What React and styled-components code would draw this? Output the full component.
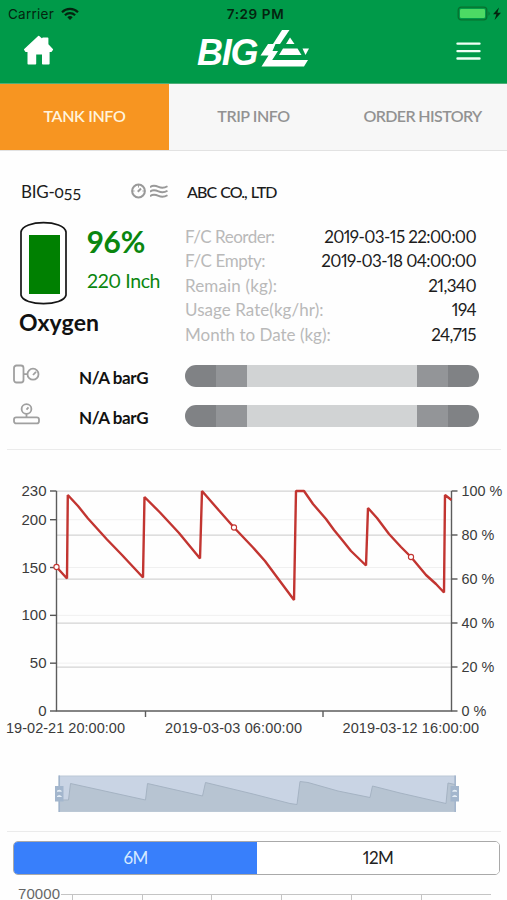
import styled, { createGlobalStyle } from "styled-components"

const GlobalStyle = createGlobalStyle`
    * { box-sizing: border-box; }
    body {
        margin: 0;
        background: #fefefe;
        font-family: "Lato", "Noto Sans", sans-serif;
        font-variant-numeric: proportional-nums;
        color: #1c1c1c;
    }
`

const Screen = styled.div`
    width: 507px;
    height: 900px;
    overflow: hidden;
    display: flex;
    flex-direction: column;
    background: #fefefe;
`

const Header = styled.header`
    height: 84px;
    flex: none;
    background: #009a49;
    border-bottom: 1px solid #4fae78;
`

const StatusBar = styled.div`
    height: 27px;
    display: grid;
    grid-template-columns: 1fr auto 1fr;
    align-items: center;
    padding: 0 4px 0 8px;
    font-family: "Inter", sans-serif;
    font-size: 13.5px;
    color: #04240f;
`

const Carrier = styled.div`
    display: flex;
    align-items: center;
    gap: 7px;
    letter-spacing: 0.25px;
`

const Clock = styled.div`
    font-weight: 600;
    font-size: 13.5px;
    letter-spacing: 0.6px;
`

const Battery = styled.div`
    display: flex;
    justify-content: flex-end;
`

const NavBar = styled.div`
    height: 56px;
    display: grid;
    grid-template-columns: 1fr auto 1fr;
    padding: 0 26px 0 23px;
`

const HomeButton = styled.div`
    padding-top: 8px;
`

const MenuButton = styled.div`
    display: flex;
    justify-content: flex-end;
    padding-top: 15px;
`

const Logo = styled.div`
    display: flex;
    padding: 2px 0 0 3px;
`

const LogoText = styled.span`
    width: 63px;
    padding-top: 3px;
    font-family: "Liberation Sans", Arial, sans-serif;
    font-size: 36px;
    line-height: 42px;
    font-weight: 700;
    font-style: italic;
    letter-spacing: -1.3px;
    color: #fff;
`

const Tabs = styled.nav`
    flex: none;
    height: 67px;
    display: grid;
    grid-template-columns: repeat(3, 1fr);
    background: #f7f7f7;
    border-bottom: 1px solid #e2e2e2;
`

const Tab = styled.div`
    display: flex;
    align-items: center;
    justify-content: center;
    padding-bottom: 3px;
    font-size: 16px;
    font-weight: 600;
    letter-spacing: ${(p) => p.$spacing || 0}px;
    color: ${(p) => (p.$active ? "#fff3dc" : "#929292")};
    background: ${(p) => (p.$active ? "#f79521" : "transparent")};
`

const Info = styled.section`
    flex: none;
    height: 200px;
    display: grid;
    grid-template-columns: 186px 1fr;
    padding-top: 30px;
`

const TankColumn = styled.div`
    padding-left: 20px;
`

const TankName = styled.div`
    height: 22px;
    display: flex;
    align-items: center;
    justify-content: space-between;
    padding: 0 18px 0 1px;
    font-size: 17px;
    line-height: 22px;
    letter-spacing: -0.25px;
    font-variant-numeric: oldstyle-nums;
`

const TankIcons = styled.div`
    display: flex;
    gap: 3px;
    padding-bottom: 2px;
`

const TankBody = styled.div`
    display: flex;
    gap: 20px;
    padding-top: 18px;
`

const Levels = styled.div`
    color: #0a860f;
`

const Percent = styled.div`
    padding-top: 2px;
    font-size: 30px;
    line-height: 36px;
    font-weight: 700;
`

const Inches = styled.div`
    padding-top: 10px;
    font-size: 19.5px;
    line-height: 24px;
    letter-spacing: -0.4px;
`

const Product = styled.div`
    margin: 2px 0 0 -1px;
    font-size: 23px;
    line-height: 30px;
    font-weight: 700;
    letter-spacing: 0.15px;
    color: #111;
`

const Customer = styled.div`
    padding-left: 1px;
    font-size: 16px;
    line-height: 22px;
    font-weight: 500;
    letter-spacing: -0.95px;
    word-spacing: 1px;
`

const Facts = styled.dl`
    margin: 22px 31px 0 0;
`

const Fact = styled.div`
    height: 24.4px;
    display: flex;
    justify-content: space-between;
    font-size: 17px;
    line-height: 24px;

    dt {
        margin-left: -1px;
        color: #b9b9b9;
        letter-spacing: ${(p) => p.$labelSpacing}px;
    }
    dd {
        margin: 0;
        letter-spacing: -0.6px;
    }
`

const Gauges = styled.section`
    flex: none;
    height: 99px;
    margin: 0 6px 0 7px;
    padding-top: 5px;
    border-bottom: 1px solid #ebebeb;
`

const Gauge = styled.div`
    height: 40.3px;
    display: grid;
    grid-template-columns: 72px 106px 294px;
    align-items: center;

    svg { margin: 0 0 4px 6px; }
`

const GaugeValue = styled.span`
    padding-top: 3px;
    font-size: 17px;
    font-weight: 700;
    letter-spacing: -0.4px;
    color: #111;
`

const GaugeBar = styled.div`
    height: 22px;
    display: flex;
    border-radius: 11px;
    overflow: hidden;
`

const Segment = styled.i`
    width: ${(p) => p.$width}px;
    background: ${(p) => p.$color};
`

const ChartSection = styled.section`
    flex: none;
    height: 382px;
    margin: 0 6px 0 7px;
    border-bottom: 1px solid #ebebeb;

    svg {
        display: block;
        margin-left: -7px;
    }
`

const AxisText = styled.text`
    font-family: "Liberation Sans", Arial, sans-serif;
    font-size: ${(p) => p.$size || 14.5}px;
    fill: #3b3b3b;
`

const Toggle = styled.div`
    flex: none;
    height: 34px;
    margin: 9px 7px 0 13px;
    display: grid;
    grid-template-columns: 243px 1fr;
    border: 1px solid #a9a9a9;
    border-radius: 5px;
    overflow: hidden;
`

const ToggleItem = styled.div`
    display: flex;
    align-items: center;
    justify-content: center;
    padding-bottom: 1px;
    font-size: 17px;
    letter-spacing: -0.6px;
    color: ${(p) => (p.$active ? "#d5e9ff" : "#222")};
    background: ${(p) => (p.$active ? "#387ffb" : "#fff")};
`

const UsageChart = styled.div`
    flex: none;
    height: 25px;

    svg { display: block; }
`

const facts = [
    { label: "F/C Reorder:", value: "2019-03-15 22:00:00", spacing: -0.5 },
    { label: "F/C Empty:", value: "2019-03-18 04:00:00", spacing: -0.4 },
    { label: "Remain (kg):", value: "21,340", spacing: 0.15 },
    { label: "Usage Rate(kg/hr):", value: "194", spacing: 0.05 },
    { label: "Month to Date (kg):", value: "24,715", spacing: 0 },
]

const segments = [
    [31, "#808285"],
    [31, "#939598"],
    [170, "#d1d3d4"],
    [31, "#939598"],
    [31, "#808285"],
]

const levelLine =
    "56.5,117 67,128.5 67.8,45 78,56 88,68.5 107,89.5 122,105 143,127.5 144.5,47 160,62.5 179,83 200,108.5 202,41 219,60.5 234,77.5 253,97.5 265,111 275,124.5 294,150 296,41 304,41 313,54 326,69 334,80 343,91 351,101 366,115.5 368,58 377,68 389,84 401,97 411,107 426,125 436,134 444,142.5 445,45 451.5,50"

const zoomLine =
    "59.5,350 68.5,350 70.5,333.5 145.5,350 147.5,333.5 202.5,346 205.5,332.5 253,344 290,353.5 297,354.5 300,331.5 308,332.5 338,341 370,347.5 372.5,336 400,343 446,353.5 448,333 455,334.5"

function WifiIcon() {
    return (
        <svg width="18" height="14" viewBox="0 0 18 14" fill="none" stroke="#04240f" strokeWidth="2.2">
            <path d="M1 5.2a11.5 11.5 0 0 1 16 0" />
            <path d="M3.9 8.2a7.4 7.4 0 0 1 10.2 0" />
            <path d="M6.3 10.2a4 4 0 0 1 5.4 0L9 13Z" fill="#04240f" stroke="none" />
        </svg>
    )
}

function BatteryIcon() {
    return (
        <svg width="46" height="16" viewBox="0 0 46 16">
            <rect x="1.2" y="1.2" width="28.6" height="12.6" rx="3" fill="none" stroke="#08702f" strokeWidth="1.3" />
            <rect x="3" y="3" width="25" height="9" rx="1.3" fill="#4cda64" />
            <path d="M31.5 5.2q2.4 2.3 0 4.6z" fill="#08702f" />
            <path d="M42 1.5 36 8.3h3.4L37.6 14 44 6.700h-3.600z" fill="#04240f" />
        </svg>
    )
}

function GaugeTankIcon() {
    return (
        <svg width="27" height="20" viewBox="0 0 27 20" fill="none" stroke="#a0a0a0" strokeWidth="1.8">
            <rect x="1" y="1.5" width="9.5" height="17" rx="2.5" />
            <path d="M10.5 10.2h4M20 11l3-3.2" />
            <circle cx="20" cy="10.2" r="5.5" />
        </svg>
    )
}

function GaugePipeIcon() {
    return (
        <svg width="27" height="22" viewBox="0 0 27 22" fill="none" stroke="#a0a0a0" strokeWidth="1.8">
            <circle cx="13.5" cy="6" r="4.9" />
            <path d="M13.5 6.6l2-2.2M13.5 11v4" />
            <rect x="1" y="14.4" width="25" height="6" rx="2.2" />
        </svg>
    )
}

function LevelChart() {
    const y = (value) => 261 - (value * 220) / 230
    return (
        <svg width="507" height="381" viewBox="0 0 507 381">
            {[50, 100, 150, 200].map((v) => (
                <path key={v} d={`M57 ${y(v)}H451`} stroke="#f0f0f0" />
            ))}
            {[41, 85, 129, 173, 217].map((v) => (
                <path key={v} d={`M57 ${v + 0.2}H451`} stroke="#d3d3d3" strokeWidth="1.2" />
            ))}
            <path d="M56.5 41V261H451.5V41M145.5 261v6M323 261v6" fill="none" stroke="#5c5c5c" strokeWidth="1.4" />
            {[0, 50, 100, 150, 200, 230].map((v) => (
                <g key={v}>
                    <path d={`M50 ${y(v)}h6.5`} stroke="#555" strokeWidth="1.4" />
                    <AxisText x="46.5" y={y(v) + 5} textAnchor="end" $size={15}>{v}</AxisText>
                </g>
            ))}
            {[0, 20, 40, 60, 80, 100].map((v) => (
                <g key={v}>
                    <path d={`M451.5 ${261 - v * 2.2}h6`} stroke="#555" strokeWidth="1.4" />
                    <AxisText x="461.5" y={266 - v * 2.2} $size={14.4}>{v} %</AxisText>
                </g>
            ))}
            <AxisText x="6" y="283" textLength="119">19-02-21 20:00:00</AxisText>
            <AxisText x="165" y="283" textLength="137">2019-03-03 06:00:00</AxisText>
            <AxisText x="342.5" y="283" textLength="136.5">2019-03-12 16:00:00</AxisText>
            <polyline points={levelLine} fill="none" stroke="#c23531" strokeWidth="2.4" strokeLinejoin="bevel" />
            {[[56.5, 117], [234, 77.5], [411, 107]].map(([cx, cy]) => (
                <circle key={cx} cx={cx} cy={cy} r="2.6" fill="#fff" stroke="#c23531" strokeWidth="1.1" />
            ))}

            <rect x="59" y="326" width="396" height="35.5" fill="#c9d4e4" stroke="#bbc8d5" />
            <polygon points={`59.5,361 ${zoomLine} 455,361`} fill="#b7c4d2" />
            <polyline points={zoomLine} fill="none" stroke="#a5b3c3" />
            <path d="M59.3 325.5v36.5M455.2 325.5v36.5" stroke="#a1b4cc" strokeWidth="1.5" />
            {[55, 450.5].map((x) => (
                <g key={x} transform={`translate(${x} 336)`}>
                    <path d="M0 0h8.5v15.5H0z" fill="#a3b6cd" />
                    <path d="M2 5.2q2.3-2 4.5 0zM2 10.5q2.3-2 4.5 0z" fill="#edf4fa" stroke="#edf4fa" strokeWidth=".7" />
                </g>
            ))}
        </svg>
    )
}

export default function App() {
    return (
        <>
            <GlobalStyle />
            <Screen>
                <Header>
                    <StatusBar>
                        <Carrier>Carrier <WifiIcon /></Carrier>
                        <Clock>7:29 PM</Clock>
                        <Battery><BatteryIcon /></Battery>
                    </StatusBar>
                    <NavBar>
                        <HomeButton>
                            <svg width="31" height="31" viewBox="0 0 31 31" fill="#fff" stroke="#fff" strokeWidth="1.6" strokeLinejoin="round">
                                <path d="M15.7 1.5 20 5.4V3.2H24.6V9.6L29.3 14.5 28 16.2H25.8V28.8H19.8V18.8H12.4V28.8H5.3V16.2H3L1.8 14.5Z" />
                            </svg>
                        </HomeButton>
                        <Logo>
                            <LogoText>BIG</LogoText>
                            <svg width="50" height="40" viewBox="0 0 50 40" fill="#fff">
                                <path d="M22 1h7.5L20 15h-7z" />
                                <path d="M30 8.5 34.5 15H26z" />
                                <path d="M23 19.500H37.500L41.500 26H19z" />
                                <path d="M42.500 19.500h6.500L45.500 26z" />
                                <path d="M8 15h7.500L12.500 22H18L12.200 31H48L44 37.500H1.500L8.500 26.500H.5z" />
                            </svg>
                        </Logo>
                        <MenuButton>
                            <svg width="25" height="20" viewBox="0 0 25 20" stroke="#effff5" strokeWidth="2.4" strokeLinecap="round">
                                <path d="M1.5 1.6h22M1.5 9.1h22M1.5 16.5h22" />
                            </svg>
                        </MenuButton>
                    </NavBar>
                </Header>

                <Tabs>
                    <Tab $active $spacing={-0.35}>TANK INFO</Tab>
                    <Tab $spacing={-0.45}>TRIP INFO</Tab>
                    <Tab $spacing={-0.6}>ORDER HISTORY</Tab>
                </Tabs>

                <Info>
                    <TankColumn>
                        <TankName>
                            BIG-055
                            <TankIcons>
                                <svg width="16" height="16" viewBox="0 0 16 16" fill="none" stroke="#999" strokeWidth="2">
                                    <circle cx="7.5" cy="8" r="6.4" />
                                    <path d="M6.800 8.800l3.200-3.300" />
                                    <path d="M7.500 1.600v3M13.900 8h-2.500M1.100 8h2.500" strokeWidth=".9" />
                                </svg>
                                <svg width="18" height="16" viewBox="0 0 18 16" fill="none" stroke="#999" strokeWidth="1.8">
                                    <path d="M0 4.200c3-2.500 5.400-1.700 8.500-.3s5.600 1.400 9-.7M0 8.700c3-2.500 5.400-1.700 8.500-.3s5.600 1.400 9-.7M0 13.200c3-2.500 5.400-1.700 8.500-.3s5.600 1.400 9-.7" />
                                </svg>
                            </TankIcons>
                        </TankName>
                        <TankBody>
                            <svg width="47" height="84" viewBox="0 0 47 84">
                                <path d="M1 11C3 -1.5 44-1.5 46 11V74C44 85.5 3 85.5 1 74Z" fill="#fff" stroke="#161616" strokeWidth="1.7" />
                                <path d="M9 14h31v59H9z" fill="#008001" />
                            </svg>
                            <Levels>
                                <Percent>96%</Percent>
                                <Inches>220 Inch</Inches>
                            </Levels>
                        </TankBody>
                        <Product>Oxygen</Product>
                    </TankColumn>
                    <div>
                        <Customer>ABC CO., LTD</Customer>
                        <Facts>
                            {facts.map((fact) => (
                                <Fact key={fact.label} $labelSpacing={fact.spacing}>
                                    <dt>{fact.label}</dt>
                                    <dd>{fact.value}</dd>
                                </Fact>
                            ))}
                        </Facts>
                    </div>
                </Info>

                <Gauges>
                    {[GaugeTankIcon, GaugePipeIcon].map((Icon, i) => (
                        <Gauge key={i}>
                            <Icon />
                            <GaugeValue>N/A barG</GaugeValue>
                            <GaugeBar>
                                {segments.map(([width, color], j) => (
                                    <Segment key={j} $width={width} $color={color} />
                                ))}
                            </GaugeBar>
                        </Gauge>
                    ))}
                </Gauges>

                <ChartSection>
                    <LevelChart />
                </ChartSection>

                <Toggle>
                    <ToggleItem $active>6M</ToggleItem>
                    <ToggleItem>12M</ToggleItem>
                </Toggle>

                <UsageChart>
                    <svg width="507" height="25" viewBox="0 0 507 25">
                        <AxisText x="18" y="24" textLength="42" $size={15} opacity=".78">70000</AxisText>
                        <path d="M61 19.5H491M72.5 19.5V25M142.5 19.5V25M211.5 19.5V25M281.5 19.5V25M351.5 19.5V25M421.5 19.5V25" stroke="#c4c4c4" />
                    </svg>
                </UsageChart>
            </Screen>
        </>
    )
}
